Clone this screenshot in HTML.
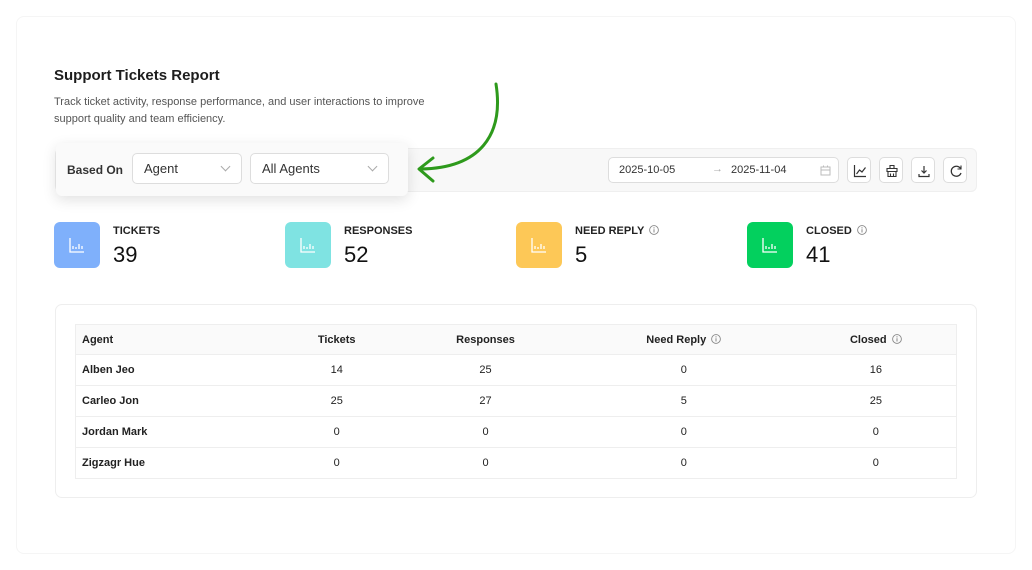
<!DOCTYPE html>
<html><head><meta charset="utf-8"><style>
*{box-sizing:border-box;margin:0;padding:0}
body{width:1032px;height:570px;background:#fff;font-family:"Liberation Sans",sans-serif;color:#1f1f1f;position:relative;overflow:hidden}
.abs{position:absolute}
.frame{left:16px;top:16px;width:1000px;height:538px;border:1px solid #f5f5f5;border-radius:8px}
h1{position:absolute;left:54px;top:67px;font-size:15px;font-weight:bold;color:#1d1d1d}
.desc{left:54px;top:94px;font-size:11px;line-height:17px;color:#555;width:390px}
.bar{left:55px;top:148px;width:922px;height:44px;background:#f8f8f8;border:1px solid #efefef;border-radius:6px}
.float{left:56px;top:143px;width:352px;height:53px;background:#fafafa;border-radius:6px;box-shadow:0 4px 14px rgba(0,0,0,.12)}
.sel{position:absolute;top:10px;height:31px;border:1px solid #ddd;border-radius:5px;background:#fff;font-size:13px;color:#333;padding:7px 11px}
.sel:after{content:"";position:absolute;right:12px;top:9px;width:6px;height:6px;border-right:1px solid #aaa;border-bottom:1px solid #aaa;transform:rotate(45deg)}
.date{left:608px;top:157px;width:231px;height:26px;border:1px solid #ddd;border-radius:5px;background:#fff;font-size:11px;color:#333}
.btn{top:157px;width:24px;height:26px;border:1px solid #ddd;border-radius:5px;background:#fff}
.btn svg{position:absolute;left:5px;top:6px}
.ic{width:46px;height:46px;border-radius:6px}
.ic svg{position:absolute;left:15px;top:15px}
.lab{font-size:11px;font-weight:bold;color:#222;white-space:nowrap}
.num{font-size:22px;color:#111}
.card{left:55px;top:304px;width:922px;height:194px;border:1px solid #eee;border-radius:7px}
table{position:absolute;left:75px;top:324px;width:882px;border-collapse:collapse;font-size:11px;border:1px solid #eee}
td,th{height:31px;border-bottom:1px solid #eee;text-align:center;color:#222;white-space:nowrap;vertical-align:middle}
th{background:#fafafa;font-weight:bold;height:30px}
td:first-child,th:first-child{text-align:left;padding-left:6px;font-weight:bold}
svg.i{vertical-align:-1px;margin-left:2px}
</style></head><body>
<svg width="0" height="0" style="position:absolute"><defs><g id="info"><circle cx="5" cy="5" r="4.4" fill="none" stroke="#888" stroke-width=".9"/><path d="M5 4.3v3.2" stroke="#888" stroke-width="1"/><circle cx="5" cy="2.9" r=".6" fill="#888"/></g></defs></svg>
<div class="abs frame"></div>
<h1>Support Tickets Report</h1>
<div class="abs desc">Track ticket activity, response performance, and user interactions to improve support quality and team efficiency.</div>
<div class="abs bar"></div>
<div class="abs float">
<div class="abs" style="left:11px;top:20px;font-size:12px;font-weight:bold;color:#333">Based On</div>
<div class="sel" style="left:76px;width:110px">Agent</div>
<div class="sel" style="left:194px;width:139px">All Agents</div>
</div>
<svg class="abs" style="left:0;top:0" width="1032" height="570"><g fill="none" stroke="#2e9a1c" stroke-width="3" stroke-linecap="round" stroke-linejoin="round"><path d="M496 84 C504 135 480 168 421 169"/><path d="M433 158 L419 169 L433 181"/></g></svg>
<div class="abs date"><span class="abs" style="left:10px;top:6px">2025-10-05</span><span class="abs" style="left:103px;top:5px;color:#aaa">→</span><span class="abs" style="left:122px;top:6px">2025-11-04</span>
<svg class="abs" style="left:211px;top:7px" width="11" height="11"><rect x="1" y="2" width="9" height="8" fill="none" stroke="#bbb"/><path d="M1 5h9M3.5 0.5v2M7.5 0.5v2" stroke="#bbb"/></svg></div>
<div class="abs btn" style="left:847px"><svg width="14" height="14" fill="none" stroke="#333" stroke-width="1.2"><path d="M1.5 1v11.5H13M3.5 10l3-4 2.5 2 3.5-4.5"/></svg></div>
<div class="abs btn" style="left:879px"><svg width="14" height="14" fill="none" stroke="#333" stroke-width="1.1"><path d="M5 1.5h4v3H5zM2 4.5h10v3H2zM3 7.5v5h8v-5M5.5 9.5v3M8.5 9.5v3"/></svg></div>
<div class="abs btn" style="left:911px"><svg width="14" height="14" fill="none" stroke="#333" stroke-width="1.2"><path d="M7 2v7M4.5 6.5L7 9l2.5-2.5M2 10v2.5h10V10"/></svg></div>
<div class="abs btn" style="left:943px"><svg width="14" height="14" fill="none" stroke="#333" stroke-width="1.3"><path d="M11.5 4.5A5 5 0 1 0 12 9"/><path d="M12 1.5v3.5H8.5" stroke-width="1.1"/></svg></div>

<div class="abs ic" style="left:54px;top:222px;background:#7fb0fb"><svg width="16" height="16" fill="none" stroke="#fff" stroke-width="1.3"><path d="M1 1v14h14M4 12v-3M7 12v-2M10 12v-5M13 12v-3"/></svg></div>
<div class="abs lab" style="left:113px;top:225px">TICKETS</div><div class="abs num" style="left:113px;top:242px">39</div>
<div class="abs ic" style="left:285px;top:222px;background:#7fe3e2"><svg width="16" height="16" fill="none" stroke="#fff" stroke-width="1.3"><path d="M1 1v14h14M4 12v-3M7 12v-2M10 12v-5M13 12v-3"/></svg></div>
<div class="abs lab" style="left:344px;top:225px">RESPONSES</div><div class="abs num" style="left:344px;top:242px">52</div>
<div class="abs ic" style="left:516px;top:222px;background:#fdc857"><svg width="16" height="16" fill="none" stroke="#fff" stroke-width="1.3"><path d="M1 1v14h14M4 12v-3M7 12v-2M10 12v-5M13 12v-3"/></svg></div>
<div class="abs lab" style="left:575px;top:225px">NEED REPLY <svg class="i" width="10" height="10"><use href="#info"/></svg></div><div class="abs num" style="left:575px;top:242px">5</div>
<div class="abs ic" style="left:747px;top:222px;background:#03d05e"><svg width="16" height="16" fill="none" stroke="#fff" stroke-width="1.3"><path d="M1 1v14h14M4 12v-3M7 12v-2M10 12v-5M13 12v-3"/></svg></div>
<div class="abs lab" style="left:806px;top:225px">CLOSED <svg class="i" width="10" height="10"><use href="#info"/></svg></div><div class="abs num" style="left:806px;top:242px">41</div>

<div class="abs card"></div>
<table>
<colgroup><col style="width:199px"><col style="width:125px"><col style="width:173px"><col style="width:224px"><col style="width:161px"></colgroup>
<tr><th>Agent</th><th>Tickets</th><th>Responses</th><th>Need Reply <svg class="i" width="10" height="10"><use href="#info"/></svg></th><th>Closed <svg class="i" width="10" height="10"><use href="#info"/></svg></th></tr>
<tr><td>Alben Jeo</td><td>14</td><td>25</td><td>0</td><td>16</td></tr>
<tr><td>Carleo Jon</td><td>25</td><td>27</td><td>5</td><td>25</td></tr>
<tr><td>Jordan Mark</td><td>0</td><td>0</td><td>0</td><td>0</td></tr>
<tr><td>Zigzagr Hue</td><td>0</td><td>0</td><td>0</td><td>0</td></tr>
</table>
</body></html>
